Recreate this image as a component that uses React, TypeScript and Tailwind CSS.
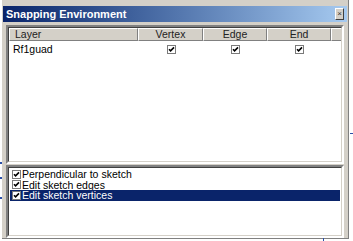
import React from 'react'

type Col = { label: string; width: string; align: 'left' | 'center' }

const columns: Col[] = [
  { label: 'Layer', width: 'w-[129px]', align: 'left' },
  { label: 'Vertex', width: 'w-[65px]', align: 'center' },
  { label: 'Edge', width: 'w-[64px]', align: 'center' },
  { label: 'End', width: 'w-[64px]', align: 'center' },
]

const options = [
  { label: 'Perpendicular to sketch', selected: false },
  { label: 'Edit sketch edges', selected: false },
  { label: 'Edit sketch vertices', selected: true },
]

const CheckBox: React.FC = () => (
  <svg width="9" height="9" viewBox="0 0 9 9" className="block shrink-0">
    <rect x="0.5" y="0.5" width="8" height="8" fill="#ffffff" stroke="#7a7a7a" />
    <path d="M2 4.2 L3.6 5.9 L7 2.4" fill="none" stroke="#000000" strokeWidth="1.6" />
  </svg>
)

const App: React.FC = () => {
  return (
    <div className="relative w-[353px] h-[241px] overflow-hidden bg-white font-['Liberation_Sans',Arial,sans-serif] text-[10.5px] leading-none text-black">
      {/* stray bits of the map canvas behind the dialog */}
      <div className="absolute left-0 top-[162px] w-[2px] h-[2px] bg-[#2a4fa8]" />
      <div className="absolute left-0 top-[177px] w-[2px] h-[2px] bg-[#2a4fa8]" />
      <div className="absolute left-0 top-[197px] w-[2px] h-[2px] bg-[#2a4fa8]" />
      <div className="absolute left-[350px] top-[133px] w-[3px] h-[1px] bg-[#2a4fa8]" />
      <div className="absolute left-[323px] top-[238px] w-[1px] h-[3px] bg-[#2a4fa8]" />

      <div className="ml-[2px] w-[347px] h-[239px] bg-[#d4d0c8] border-r border-b border-[#808080] flex flex-col px-[1px] pt-[6px]">
        {/* title bar */}
        <div className="h-[16px] flex items-center justify-between bg-gradient-to-r from-[#0a246a] to-[#a6caf0] pl-[3px] pr-[3px]">
          <span className="font-bold text-[11px] text-white">Snapping Environment</span>
          <div className="w-[9px] h-[12px] bg-[#d4d0c8] border border-t-white border-l-white border-r-[#404040] border-b-[#404040] flex items-center justify-center text-[8px] text-[#333]">
            ×
          </div>
        </div>

        {/* layers list */}
        <div className="mt-[3px] mx-[3px] h-[139px] bg-white border-2 border-t-[#808080] border-l-[#808080] border-b-white border-r-white">
          <div className="h-full border border-t-[#404040] border-l-[#404040] border-b-[#d4d0c8] border-r-[#d4d0c8] flex flex-col">
            <div className="h-[13px] flex bg-[#d4d0c8]">
              {columns.map((c) => (
                <div
                  key={c.label}
                  className={`${c.width} h-full flex items-center border-t border-l border-t-white border-l-white border-r border-b border-r-[#808080] border-b-[#808080] ${
                    c.align === 'left' ? 'justify-start pl-[5px]' : 'justify-center'
                  } text-[#222]`}
                >
                  {c.label}
                </div>
              ))}
              <div className="flex-1 h-full border-t border-l border-t-white border-l-white border-b border-b-[#808080]" />
            </div>
            <div className="h-[12px] mt-[2px] flex items-center">
              <div className="w-[129px] pl-[4px]">Rf1guad</div>
              <div className="w-[65px] flex justify-center pl-[2px]">
                <CheckBox />
              </div>
              <div className="w-[64px] flex justify-center">
                <CheckBox />
              </div>
              <div className="w-[64px] flex justify-center">
                <CheckBox />
              </div>
            </div>
          </div>
        </div>

        {/* options list */}
        <div className="mt-[1px] mx-[3px] h-[73px] bg-white border-2 border-t-[#808080] border-l-[#808080] border-b-white border-r-white">
          <div className="h-full border border-t-[#404040] border-l-[#404040] border-b-[#d4d0c8] border-r-[#d4d0c8] flex flex-col pt-[1px] px-[1px]">
            {options.map((o) => (
              <div
                key={o.label}
                className={`h-[10.5px] flex items-center gap-[1px] pl-[2px] ${o.selected ? 'bg-[#0a246a] text-white' : ''}`}
              >
                <CheckBox />
                <span>{o.label}</span>
              </div>
            ))}
          </div>
        </div>
      </div>
    </div>
  )
}

export default App
